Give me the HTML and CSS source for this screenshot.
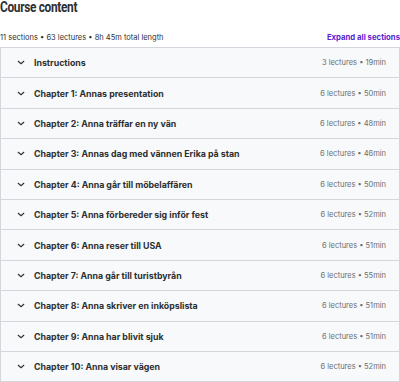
FILE: index.html
```html
<!DOCTYPE html>
<html>
<head>
<meta charset="utf-8">
<link rel="stylesheet" href="styles.css">
</head>
<body>
<div class="page">
  <h2 class="title">Course content</h2>
  <div class="meta">
    <span class="stats">11 sections • 63 lectures • 8h 45m total length</span>
    <span class="expand">Expand all sections</span>
  </div>
  <div class="sections">
    <div class="row"><svg class="chev" viewBox="0 0 10 6"><path d="M1.5 1.5 L5 4.5 L8.5 1.5" /></svg><span class="name">Instructions</span><span class="info">3 lectures • 19min</span></div>
    <div class="row"><svg class="chev" viewBox="0 0 10 6"><path d="M1.5 1.5 L5 4.5 L8.5 1.5" /></svg><span class="name">Chapter 1: Annas presentation</span><span class="info">6 lectures • 50min</span></div>
    <div class="row"><svg class="chev" viewBox="0 0 10 6"><path d="M1.5 1.5 L5 4.5 L8.5 1.5" /></svg><span class="name">Chapter 2: Anna träffar en ny vän</span><span class="info">6 lectures • 48min</span></div>
    <div class="row"><svg class="chev" viewBox="0 0 10 6"><path d="M1.5 1.5 L5 4.5 L8.5 1.5" /></svg><span class="name">Chapter 3: Annas dag med vännen Erika på stan</span><span class="info">6 lectures • 46min</span></div>
    <div class="row"><svg class="chev" viewBox="0 0 10 6"><path d="M1.5 1.5 L5 4.5 L8.5 1.5" /></svg><span class="name">Chapter 4: Anna går till möbelaffären</span><span class="info">6 lectures • 50min</span></div>
    <div class="row"><svg class="chev" viewBox="0 0 10 6"><path d="M1.5 1.5 L5 4.5 L8.5 1.5" /></svg><span class="name">Chapter 5: Anna förbereder sig inför fest</span><span class="info">6 lectures • 52min</span></div>
    <div class="row"><svg class="chev" viewBox="0 0 10 6"><path d="M1.5 1.5 L5 4.5 L8.5 1.5" /></svg><span class="name">Chapter 6: Anna reser till USA</span><span class="info">6 lectures • 51min</span></div>
    <div class="row"><svg class="chev" viewBox="0 0 10 6"><path d="M1.5 1.5 L5 4.5 L8.5 1.5" /></svg><span class="name">Chapter 7: Anna går till turistbyrån</span><span class="info">6 lectures • 55min</span></div>
    <div class="row"><svg class="chev" viewBox="0 0 10 6"><path d="M1.5 1.5 L5 4.5 L8.5 1.5" /></svg><span class="name">Chapter 8: Anna skriver en inköpslista</span><span class="info">6 lectures • 51min</span></div>
    <div class="row"><svg class="chev" viewBox="0 0 10 6"><path d="M1.5 1.5 L5 4.5 L8.5 1.5" /></svg><span class="name">Chapter 9: Anna har blivit sjuk</span><span class="info">6 lectures • 51min</span></div>
    <div class="row"><svg class="chev" viewBox="0 0 10 6"><path d="M1.5 1.5 L5 4.5 L8.5 1.5" /></svg><span class="name">Chapter 10: Anna visar vägen</span><span class="info">6 lectures • 52min</span></div>
  </div>
</div>
</body>
</html>
```
FILE: styles.css
```css
html, body {
  margin: 0;
  padding: 0;
  background: #ffffff;
}
body {
  font-family: Inter, "Noto Sans", sans-serif;
  color: #2d2f31;
  width: 400px;
  overflow: hidden;
}
.page {
  width: 400px;
}
.title {
  display: block;
  margin: 0;
  font-family: Roboto, "Liberation Sans", sans-serif;
  font-size: 14.5px;
  font-weight: 700;
  line-height: 16px;
  letter-spacing: -0.4px;
  color: #2d2f31;
  transform: scaleX(0.82);
  transform-origin: left center;
  white-space: nowrap;
}
.meta {
  display: flex;
  justify-content: space-between;
  align-items: baseline;
  margin-top: 16px;
  margin-bottom: 5px;
  height: 10px;
  line-height: 10px;
  font-size: 7.5px;
}
.stats {
  color: #2d2f31;
}
.expand {
  color: #5624d0;
  font-weight: 700;
  font-size: 7.75px;
}
.sections {
  border: 1px solid #d1d7dc;
  border-bottom: none;
}
.row {
  display: flex;
  align-items: center;
  height: 29.4px;
  background: #f7f9fa;
  border-bottom: 1px solid #d1d7dc;
  padding: 0 13px 0 16px;
}
.chev {
  width: 8px;
  height: 5px;
  fill: none;
  stroke: #2d2f31;
  stroke-width: 1.4;
  stroke-linecap: round;
  stroke-linejoin: round;
  margin-right: 9px;
}
.name {
  flex: 1;
  font-size: 8.8px;
  font-weight: 700;
}
.info {
  font-size: 7.5px;
  color: #6a6f73;
}
```
